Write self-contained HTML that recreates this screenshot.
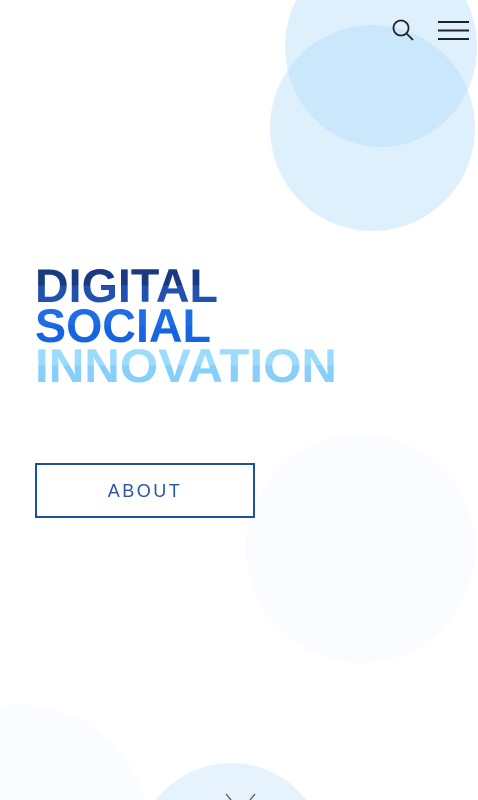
<!DOCTYPE html>
<html><head><style>
html,body{margin:0;padding:0;width:478px;height:800px;overflow:hidden;background:#fff;font-family:"Liberation Sans",sans-serif}
#w{position:relative;width:478px;height:800px;overflow:hidden}
.c{position:absolute;border-radius:50%}
</style></head><body><div id="w">
<div class="c" style="left:-110px;top:705px;width:260px;height:260px;background:#fafcff"></div>
<div class="c" style="left:246px;top:434px;width:229px;height:229px;background:#fafcff"></div>
<div class="c" style="left:285px;top:-53px;width:192px;height:200px;background:rgba(170,215,250,0.38)"></div>
<div class="c" style="left:270px;top:25px;width:205px;height:206px;background:rgba(170,215,250,0.38)"></div>
<div class="c" style="left:136px;top:763px;width:190px;height:190px;background:#e6f3fd"></div>
<svg style="position:absolute;left:224px;top:792px" width="34" height="8"><path d="M2 2 L7 8 M26 8 L31 2" stroke="#555" stroke-width="1.3"/></svg>
<svg style="position:absolute;left:390px;top:17px" width="28" height="28"><circle cx="11" cy="11" r="7.5" fill="none" stroke="#222" stroke-width="1.8"/><path d="M16.5 16.5 L23 23" stroke="#222" stroke-width="1.8"/></svg>
<svg style="position:absolute;left:438px;top:18px" width="32" height="26"><path d="M0 4H31M0 12.5H31M0 21H31" stroke="#222" stroke-width="2"/></svg>
<svg style="position:absolute;left:0;top:0" width="478" height="400">
<defs>
<linearGradient id="g1" x1="0" y1="0" x2="0" y2="1"><stop offset="0.5" stop-color="#173a80"/><stop offset="0.5" stop-color="#2152b0"/></linearGradient>
<linearGradient id="g2" x1="0" y1="0" x2="0" y2="1"><stop offset="0.5" stop-color="#1e6ce6"/><stop offset="0.5" stop-color="#1565e0"/></linearGradient>
<linearGradient id="g3" x1="0" y1="0" x2="0" y2="1"><stop offset="0.5" stop-color="#9bdcfd"/><stop offset="0.5" stop-color="#86cffb"/></linearGradient>
</defs>
<text x="35" y="302" font-size="47" font-weight="bold" fill="url(#g1)" textLength="183" lengthAdjust="spacingAndGlyphs" font-family="Liberation Sans">DIGITAL</text>
<text x="35" y="342" font-size="47" font-weight="bold" fill="url(#g2)" textLength="176" lengthAdjust="spacingAndGlyphs" font-family="Liberation Sans">SOCIAL</text>
<text x="35" y="382" font-size="47" font-weight="bold" fill="url(#g3)" textLength="302" lengthAdjust="spacingAndGlyphs" font-family="Liberation Sans">INNOVATION</text>
</svg>
<div style="position:absolute;left:35px;top:463px;width:216px;height:51px;border:2px solid #1e4fa0;color:#2a55a5;font-size:18px;letter-spacing:2.5px;text-align:center;line-height:53px">ABOUT</div>
</div></body></html>
